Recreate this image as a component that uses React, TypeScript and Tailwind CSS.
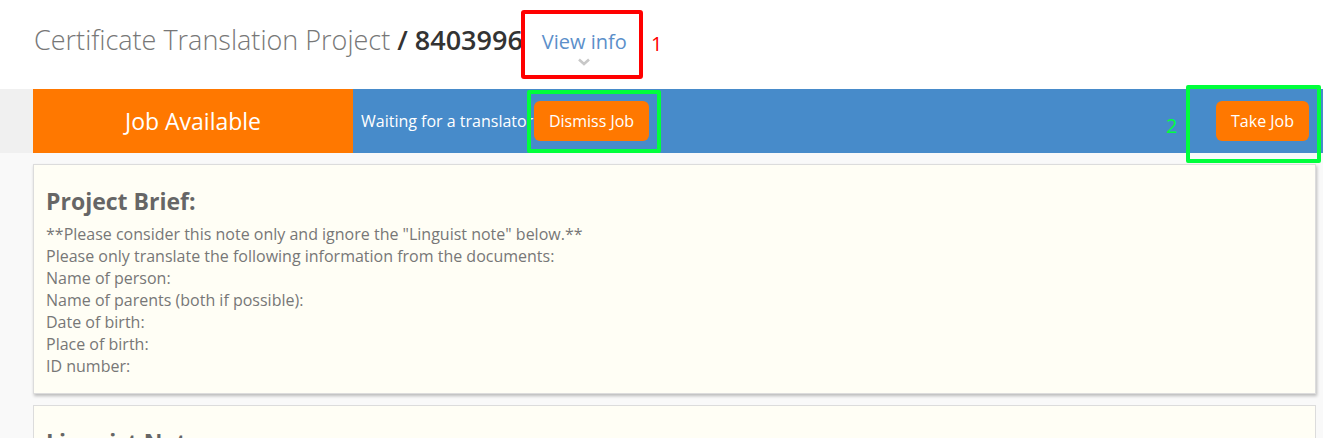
const briefLines = [
  '**Please consider this note only and ignore the "Linguist note" below.**',
  "Please only translate the following information from the documents:",
  "Name of person:",
  "Name of parents (both if possible):",
  "Date of birth:",
  "Place of birth:",
  "ID number:",
];

const ChevronDown = () => (
  <svg width="12" height="8" viewBox="0 0 12 8" className="text-[#c8c8c8]">
    <path d="M1 1.5 L6 6 L11 1.5" fill="none" stroke="currentColor" strokeWidth="2.6" />
  </svg>
);

const OrangeButton = ({ label, className = "" }: { label: string; className?: string }) => (
  <button
    className={`h-[40px] rounded-[6px] bg-[#ff7800] text-[16px] text-white ${className}`}
  >
    {label}
  </button>
);

export default function App() {
  return (
    <div
      className="relative w-[1323px] h-[438px] overflow-hidden bg-[#f9f9f9]"
      style={{ fontFamily: '"Open Sans", "Noto Sans", sans-serif' }}
    >
      {/* header */}
      <div className="h-[89px] bg-white flex items-start pl-[34px] pt-[22px]">
        <h1 className="text-[27px] leading-[36px] font-light text-[#777]">
          Certificate Translation Project{" "}
          <span className="font-semibold text-[#333]">/ 8403996</span>
        </h1>
        <div className="ml-[19px] flex flex-col items-center pt-[7px]">
          <span className="text-[20px] leading-[26px] text-[#5b8fca]">View info</span>
          <span className="mt-[3px]">
            <ChevronDown />
          </span>
        </div>
      </div>

      {/* status bar */}
      <div className="flex h-[64px]">
        <div className="w-[33px] bg-[#f0f0f0]" />
        <div className="w-[320px] bg-[#ff7800] flex items-center justify-center text-white text-[23px]">
          Job Available
        </div>
        <div className="flex-1 bg-[#478bca] flex items-center pl-[8px] pr-[14px]">
          <span className="text-white text-[16px] whitespace-nowrap w-[173px] overflow-hidden">
            Waiting for a translator
          </span>
          <OrangeButton label="Dismiss Job" className="w-[115px]" />
          <div className="flex-1" />
          <OrangeButton label="Take Job" className="w-[93px]" />
        </div>
      </div>

      {/* content */}
      <div className="pl-[33px] pr-[7px] pt-[11px] flex flex-col gap-[11px]">
        <div className="bg-[#fffef5] border border-[#dcdcdc] shadow-[1px_2px_3px_rgba(0,0,0,0.25)] px-[12px] pt-[20px] pb-[16px]">
          <h2 className="text-[23px] leading-[32px] font-bold text-[#666] mb-[6px]">
            Project Brief:
          </h2>
          <div className="text-[16px] leading-[22px] text-[#777]">
            {briefLines.map((line) => (
              <div key={line}>{line}</div>
            ))}
          </div>
        </div>
        <div className="bg-[#fffef5] border border-[#dcdcdc] px-[12px] pt-[20px] h-[80px]">
          <h2 className="text-[23px] leading-[32px] font-bold text-[#666]">Linguist Note</h2>
        </div>
      </div>

      {/* annotations */}
      <div className="absolute left-[521px] top-[10px] w-[122px] h-[69px] border-[4px] border-[#ff0000] rounded-[3px]" />
      <span className="absolute left-[651px] top-[31px] text-[20px] leading-[26px] text-[#ff0000]">1</span>
      <div className="absolute left-[527px] top-[90px] w-[134px] h-[63px] border-[4px] border-[#00ff3c] rounded-[2px]" />
      <span className="absolute left-[1166px] top-[113px] text-[20px] leading-[26px] text-[#00ff3c]">2</span>
      <div className="absolute left-[1186px] top-[85px] w-[135px] h-[78px] border-[4px] border-[#00ff3c] rounded-[2px]" />
    </div>
  );
}
